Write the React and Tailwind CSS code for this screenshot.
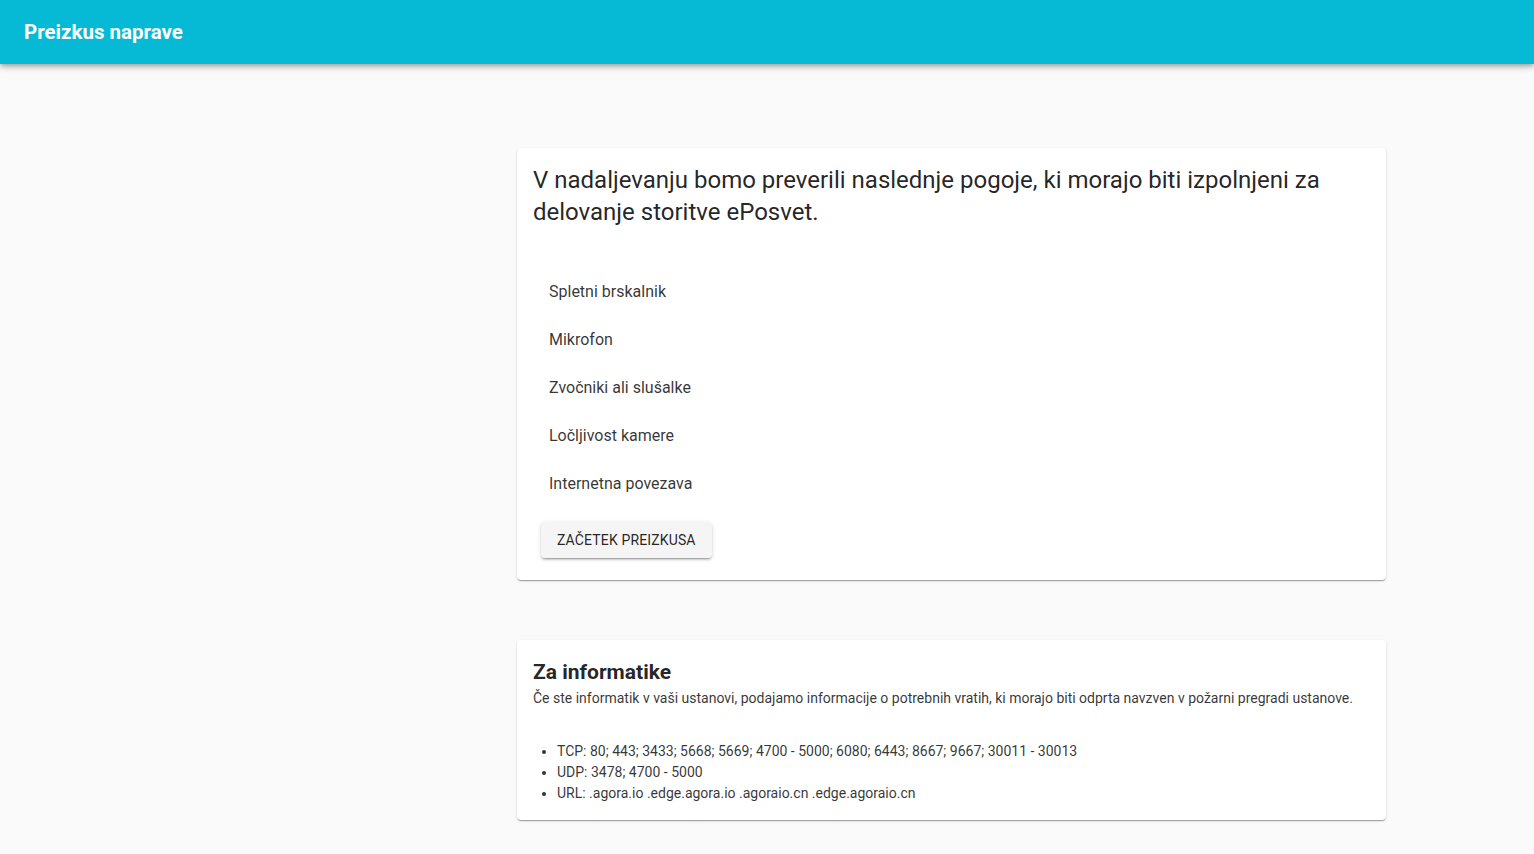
export default function App() {
  const checks = ['Spletni brskalnik', 'Mikrofon', 'Zvočniki ali slušalke', 'Ločljivost kamere', 'Internetna povezava'];
  const ports = [
    'TCP: 80; 443; 3433; 5668; 5669; 4700 - 5000; 6080; 6443; 8667; 9667; 30011 - 30013',
    'UDP: 3478; 4700 - 5000',
    'URL: .agora.io .edge.agora.io .agoraio.cn .edge.agoraio.cn',
  ];
  const card = 'bg-white rounded shadow-[0_2px_1px_-1px_rgba(0,0,0,0.2),0_1px_1px_0_rgba(0,0,0,0.14),0_1px_3px_0_rgba(0,0,0,0.12)]';

  return (
    <div className="min-h-screen bg-[#fafafa] font-['Roboto','Liberation_Sans',sans-serif] text-[rgba(0,0,0,0.87)]">
      <header className="h-16 bg-[#06b9d4] flex items-center px-6 shadow-[0_2px_4px_-1px_rgba(0,0,0,0.2),0_4px_5px_0_rgba(0,0,0,0.14),0_1px_10px_0_rgba(0,0,0,0.12)]">
        <h1 className="text-white text-[20.5px] font-bold">Preizkus naprave</h1>
      </header>

      <main className="pl-[517px] pt-[84px] pb-8">
        <div className="w-[869px] flex flex-col gap-[60px]">
          <section className={card + ' px-4 pt-4 pb-[22px]'}>
            <h2 className="text-2xl leading-8 font-normal">
              V nadaljevanju bomo preverili naslednje pogoje, ki morajo biti izpolnjeni za delovanje storitve ePosvet.
            </h2>
            <ul className="mt-[40px] text-[rgba(0,0,0,0.8)]">
              {checks.map(c => (
                <li key={c} className="h-12 flex items-center px-4 text-base">{c}</li>
              ))}
            </ul>
            <button className="mt-[14px] ml-2 h-9 px-4 rounded bg-[#f5f5f5] text-sm font-normal tracking-[0.01em] uppercase text-[rgba(0,0,0,0.87)] shadow-[0_3px_1px_-2px_rgba(0,0,0,0.2),0_2px_2px_0_rgba(0,0,0,0.14),0_1px_5px_0_rgba(0,0,0,0.12)]">
              Začetek preizkusa
            </button>
          </section>

          <section className={card + ' px-4 pt-4 pb-4'}>
            <h3 className="text-[21px] leading-8 font-bold">Za informatike</h3>
            <p className="text-sm leading-5 text-[rgba(0,0,0,0.8)]">
              Če ste informatik v vaši ustanovi, podajamo informacije o potrebnih vratih, ki morajo biti odprta navzven v požarni pregradi ustanove.
            </p>
            <ul className="mt-[33px] list-disc pl-6 text-sm leading-[21px] text-[rgba(0,0,0,0.8)]">
              {ports.map(p => (
                <li key={p}>{p}</li>
              ))}
            </ul>
          </section>
        </div>
      </main>
    </div>
  );
}
